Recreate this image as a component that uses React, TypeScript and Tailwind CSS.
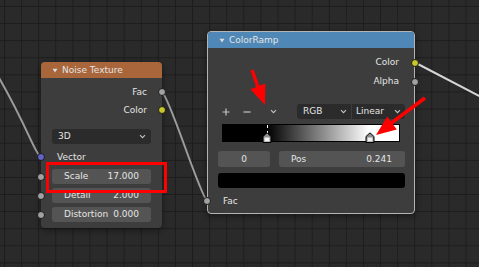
import type { ReactNode } from "react";

function Socket({ color, pos }: { color: string; pos: string }) {
  return (
    <span
      className={`absolute top-1/2 -translate-y-1/2 w-[8px] h-[8px] rounded-full border border-[#1b1b1b] ${color} ${pos}`}
    />
  );
}

function Tri() {
  return (
    <svg width="6" height="5" viewBox="0 0 6 5">
      <path d="M0.5 0.8h5L3 4.4z" fill="#dcdcdc" />
    </svg>
  );
}

function Chevron() {
  return (
    <svg width="7" height="5" viewBox="0 0 7 5">
      <path d="M1 1.2l2.5 2.5L6 1.2" stroke="#c4c4c4" strokeWidth="1.1" fill="none" />
    </svg>
  );
}

function Row({ children, className }: { children: ReactNode; className: string }) {
  return <div className={`relative flex items-center ${className}`}>{children}</div>;
}

function Field({ label, value, className }: { label: string; value: string; className: string }) {
  return (
    <div className={`relative h-[15px] ${className}`}>
      <Socket color="bg-[#a1a1a1]" pos="-left-[4px]" />
      <div className="mx-[11px] h-full rounded-[3px] bg-[#545454] flex items-center justify-between px-[12px]">
        <span>{label}</span>
        <span>{value}</span>
      </div>
    </div>
  );
}

function NoiseNode() {
  return (
    <div className="absolute left-[41px] top-[62px] w-[121px] rounded-[4px] bg-[#3d3d3d] shadow-[0_2px_6px_rgba(0,0,0,0.45)]">
      <div className="h-[16px] rounded-t-[4px] bg-[#a8663a] flex items-center pl-[11px] gap-[4px]">
        <Tri />
        <span>Noise Texture</span>
      </div>
      <div className="pt-[5px] pb-[6px]">
        <Row className="h-[18px] justify-end pr-[15px]">
          Fac
          <Socket color="bg-[#a1a1a1]" pos="-right-[4px]" />
        </Row>
        <Row className="h-[18px] justify-end pr-[15px]">
          Color
          <Socket color="bg-[#c7c729]" pos="-right-[4px]" />
        </Row>
        <div className="mt-[10px] mx-[11px] h-[15px] rounded-[3px] bg-[#2b2b2b] flex items-center justify-between pl-[6px] pr-[5px]">
          <span>3D</span>
          <Chevron />
        </div>
        <Row className="mt-[4px] h-[18px] pl-[16px]">
          Vector
          <Socket color="bg-[#6363c7]" pos="-left-[4px]" />
        </Row>
        <Field label="Scale" value="17.000" className="mt-[3px]" />
        <Field label="Detail" value="2.000" className="mt-[4px]" />
        <Field label="Distortion" value="0.000" className="mt-[4px]" />
      </div>
    </div>
  );
}

function Marker({ left }: { left: string }) {
  return (
    <svg width="10" height="11" viewBox="0 0 10 11" className={`absolute -bottom-[2px] ${left}`}>
      <path d="M1 10.5V4.5L5 0.8l4 3.7v6z" fill="#8c8c8c" stroke="#000" strokeWidth="1" />
      <rect x="2.5" y="5.5" width="5" height="4" fill="#f2f2f2" />
    </svg>
  );
}

function ColorRampNode() {
  return (
    <div className="absolute left-[207px] top-[31px] w-[208px] rounded-[4px] border border-[#b4b4b4] bg-[#3d3d3d] shadow-[0_2px_6px_rgba(0,0,0,0.45)]">
      <div className="h-[16px] rounded-t-[3px] bg-[#4f88b6] flex items-center pl-[11px] gap-[4px]">
        <Tri />
        <span>ColorRamp</span>
      </div>
      <div className="pt-[5px] pb-[3px]">
        <Row className="h-[19px] justify-end pr-[15px]">
          Color
          <Socket color="bg-[#c7c729]" pos="-right-[5px]" />
        </Row>
        <Row className="h-[19px] justify-end pr-[15px]">
          Alpha
          <Socket color="bg-[#a1a1a1]" pos="-right-[5px]" />
        </Row>
        <div className="mt-[13px] h-[15px] flex items-center">
          <svg width="8" height="8" viewBox="0 0 8 8" className="ml-[14px]">
            <path d="M4 0.5v7M0.5 4h7" stroke="#c4c4c4" strokeWidth="1.2" />
          </svg>
          <svg width="8" height="8" viewBox="0 0 8 8" className="ml-[13px]">
            <path d="M0.5 4h7" stroke="#c4c4c4" strokeWidth="1.2" />
          </svg>
          <div className="ml-[18px] w-[8px] flex justify-center">
            <Chevron />
          </div>
          <div className="ml-[20px] w-[54px] h-full rounded-l-[3px] bg-[#2b2b2b] flex items-center justify-between pl-[6px] pr-[4px]">
            <span>RGB</span>
            <Chevron />
          </div>
          <div className="ml-[1px] w-[53px] h-full rounded-r-[3px] bg-[#2b2b2b] flex items-center justify-between pl-[4px] pr-[4px]">
            <span>Linear</span>
            <Chevron />
          </div>
        </div>
        <div className="relative mt-[5px] ml-[14px] w-[178px] h-[18px] border border-black bg-[linear-gradient(to_right,#000_0%,#000_25%,#fff_83%,#fff_100%)]">
          <div className="absolute left-[44px] top-0 h-[9px] border-l border-dashed border-white" />
          <Marker left="left-[39px]" />
          <Marker left="left-[142px]" />
        </div>
        <div className="mt-[9px] ml-[10px] h-[16px] flex gap-[9px]">
          <div className="w-[52px] rounded-[3px] bg-[#545454] flex items-center justify-center">0</div>
          <div className="w-[126px] rounded-[3px] bg-[#545454] flex items-center justify-between pl-[12px] pr-[13px]">
            <span>Pos</span>
            <span>0.241</span>
          </div>
        </div>
        <div className="mt-[6px] ml-[10px] w-[187px] h-[15px] rounded-[3px] bg-black" />
        <Row className="mt-[4px] h-[18px] pl-[15px]">
          Fac
          <Socket color="bg-[#a1a1a1]" pos="-left-[5px]" />
        </Row>
      </div>
    </div>
  );
}

export default function App() {
  return (
    <div className="relative w-[479px] h-[267px] overflow-hidden bg-[#2a2a2a] bg-[linear-gradient(to_right,#1d1d1d_1px,transparent_1px),linear-gradient(to_bottom,#1d1d1d_1px,transparent_1px)] bg-size-[17.1px_17.1px] bg-position-[4px_6px] font-['DejaVu_Sans',sans-serif] text-[9px] leading-none text-[#e4e4e4]">
      <svg className="absolute inset-0" width="479" height="267">
        <path d="M-2 76 C 28 128, 34 152, 41 157.5" stroke="#9c9c9c" strokeWidth="2" fill="none" />
        <path d="M162 92 C 170 98, 198 190, 207 201" stroke="#9c9c9c" strokeWidth="2" fill="none" />
        <path d="M414 62 L 481 97" stroke="#d6d6d6" strokeWidth="2" fill="none" />
      </svg>
      <NoiseNode />
      <ColorRampNode />
      <svg className="absolute inset-0" width="479" height="267">
        <rect x="47.5" y="163.5" width="118" height="28" stroke="#ff0000" strokeWidth="3" fill="none" />
        <path d="M252 70 L258 87" stroke="#ff0000" strokeWidth="3.5" />
        <path d="M250.4 89.2 L265.4 83.4 L265 105z" fill="#ff0000" />
        <path d="M425 98 L390 124" stroke="#ff0000" strokeWidth="3.5" />
        <path d="M387.2 116.6 L396.8 129.4 L376 135z" fill="#ff0000" />
      </svg>
    </div>
  );
}
